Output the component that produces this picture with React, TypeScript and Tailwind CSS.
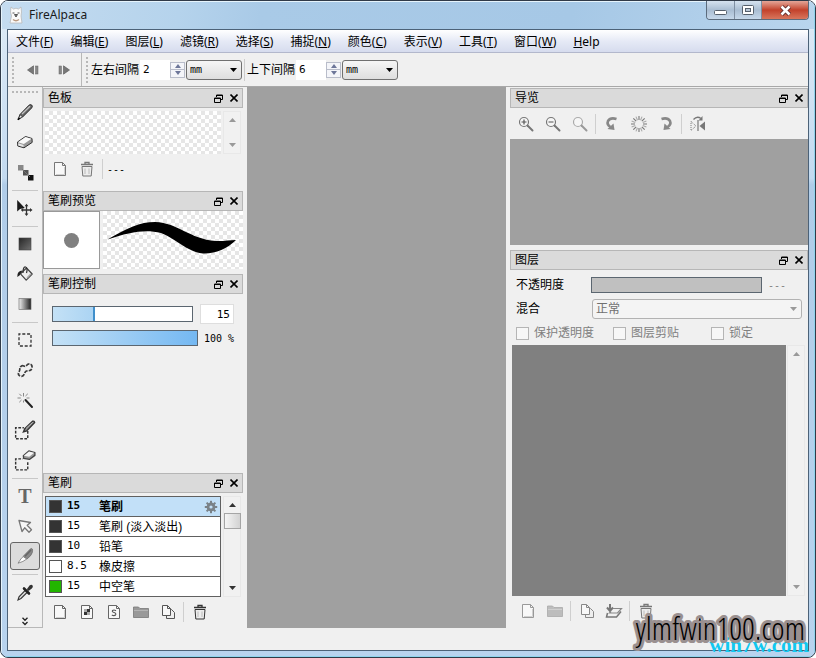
import React from "react";

type Kids = { children?: React.ReactNode };

const song = "font-['Liberation_Sans','Noto_Sans_CJK_SC',sans-serif]";
const mono = "font-['DejaVu_Sans_Mono','Noto_Sans_CJK_SC',monospace]";

function Icon({ children, size = 20 }: Kids & { size?: number }) {
  return (
    <svg width={size} height={size} viewBox="0 0 20 20" fill="none" aria-hidden="true" className="shrink-0">
      {children}
    </svg>
  );
}

/* ---------- icons ---------- */

const PencilIcon = () => (
  <Icon>
    <path d="M3 17.5 L5 12.5 L14 3.2 Q15.5 2 16.8 3.2 Q18 4.6 16.6 6 L7.6 15 Z" fill="#666" stroke="#2c2c2c" strokeWidth="1" />
    <path d="M3.4 17 L5.3 12.8 L7.4 14.9 Z" fill="#eee" stroke="#333" strokeWidth=".7" />
    <path d="M7 12 L15 4.2" stroke="#c4c4c4" strokeWidth="1.2" />
    <path d="M2.8 17.6 L4.8 16.2" stroke="#000" strokeWidth="1.4" />
  </Icon>
);
const EraserIcon = () => (
  <Icon>
    <path d="M2.5 10 L10.5 4.500 L17 6.500 L17.200 10.4 L9 15.8 L2.8 14 Z" fill="#999" stroke="#333" strokeWidth="1" strokeLinejoin="round" />
    <path d="M3 10.200 L10.500 5 L16.500 6.800 L8.800 12 Z" fill="#fafafa" />
    <path d="M3.200 11.300 L8.500 13 V15 L3.300 13.500 Z" fill="#e8e8e8" />
  </Icon>
);
const DotsIcon = () => (
  <Icon>
    <rect x="3" y="3" width="5.500" height="5.500" fill="#888" />
    <rect x="8" y="8" width="5.500" height="5.500" fill="#555" />
    <rect x="13" y="13" width="5.500" height="5.500" fill="#111" />
    <path d="M7 7 L15 15" stroke="#777" strokeWidth="1" />
  </Icon>
);
const MoveIcon = () => (
  <Icon>
    <path d="M2.200 2 V13.5 L5 11 L9.8 10 Z" fill="#1a1a1a" />
    <path d="M11.500 7.500 V16.500 M7 12 H16" stroke="#333" strokeWidth="1.300" />
    <path d="M11.500 5.800 L9.600 8.300 H13.400 Z M11.500 18 L9.600 15.600 H13.400 Z M5.800 12 L8.100 10.100 V13.900 Z M17.500 12 L15 10.100 V13.900 Z" fill="#333" />
  </Icon>
);
const SolidIcon = () => (
  <Icon>
    <defs><linearGradient id="solid" x1="0" y1="0" x2="1" y2="1"><stop stopColor="#262626" /><stop offset="1" stopColor="#707070" /></linearGradient></defs>
    <rect x="4" y="4" width="12" height="12" fill="url(#solid)" stroke="#444" strokeWidth=".6" />
  </Icon>
);
const BucketIcon = () => (
  <Icon>
    <path d="M5.500 9.800 L11.500 4 L17.200 10 L11.200 16.200 Z" fill="#eee" stroke="#444" strokeWidth="1.200" strokeLinejoin="round" />
    <path d="M8 9 Q8 2.500 10.500 3 Q13 3.800 11.500 9" stroke="#333" strokeWidth="1.200" />
    <path d="M7.500 6.500 Q2 6.500 2.300 13 L4.800 11.200 L5.600 9.500 Z" fill="#222" />
    <path d="M12 14 L16 9.800" stroke="#aaa" strokeWidth="1.500" />
  </Icon>
);
const GradientIcon = () => (
  <Icon>
    <defs><linearGradient id="grad"><stop stopColor="#f0f0f0" /><stop offset="1" stopColor="#1e1e1e" /></linearGradient></defs>
    <rect x="4" y="4.500" width="12" height="11" fill="url(#grad)" stroke="#777" strokeWidth=".7" />
  </Icon>
);
const SelectIcon = () => (
  <Icon><rect x="4" y="4" width="12" height="12" stroke="#333" strokeWidth="1.300" strokeDasharray="3 1.800" strokeDashoffset="1.500" /></Icon>
);
const LassoIcon = () => (
  <Icon>
    <path d="M6.500 6 C8.500 4.500 9.500 8 11.500 5.500 C13.500 3 17.500 3.500 17 7.500 C16.500 11.500 13.500 10.500 11.500 11 C9 11.800 10 16 6.500 16.300 C3 16 2.800 13 4.200 11.500 C5.500 10 3.800 7.500 6.500 6 Z" stroke="#3c3c3c" strokeWidth="1.700" strokeDasharray="3.800 1.200" />
  </Icon>
);
const WandIcon = () => (
  <Icon>
    <path d="M10.500 10 L17 17" stroke="#222" strokeWidth="2" strokeLinecap="round" />
    <path d="M8.500 6.500 V3 M8.500 12.500 V10.500 M5.800 8 H2.500 M14.500 8 H11.500 M6.500 6 L4.300 3.800 M10.500 6 L12.800 3.800 M6.500 10 L4.300 12.200" stroke="#888" strokeWidth="1" />
  </Icon>
);
const SelPenIcon = () => (
  <Icon size={22}>
    <path d="M12.500 11 V18 H1.500 V8 H9" stroke="#333" strokeWidth="1.300" strokeDasharray="2.500 1.300" />
    <path d="M8.500 11.800 L9.800 8.800 L17 2 Q18.500 1.500 18.800 3.200 L11.500 10.800 Z" fill="#888" stroke="#333" strokeWidth="1.200" />
    <path d="M11 8.500 L17 3" stroke="#ccc" strokeWidth=".8" />
  </Icon>
);
const SelEraserIcon = () => (
  <Icon size={22}>
    <path d="M12.500 12 V19 H1.500 V9 H8" stroke="#333" strokeWidth="1.300" strokeDasharray="2.500 1.300" />
    <path d="M8.500 6.200 L13.500 1.800 L19 3.200 L19 5.800 L14 9.500 L8.800 8.500 Z" fill="#999" stroke="#444" strokeWidth="1.200" strokeLinejoin="round" />
    <path d="M8.900 6.200 L13.600 2.300 L18.300 3.400 L13.800 7.100 Z" fill="#f5f5f5" />
  </Icon>
);
const ArrowIcon = () => (
  <Icon>
    <path d="M4 4.500 L15.500 6.500 L12.200 9.300 L16.500 13.700 L14 16.200 L9.700 11.800 L7 15.500 Z" fill="#f6f6f6" stroke="#777" strokeWidth="1.300" strokeLinejoin="round" />
  </Icon>
);
const KnifeIcon = () => (
  <Icon>
    <path d="M8 10.500 L15.500 2.800 Q18.300 1.500 17.300 6.500 Q16.600 9.500 12 13 Z" fill="#888" stroke="#666" strokeWidth=".7" />
    <path d="M3 17.200 Q6.200 12 8.200 10.600 L11.700 13 Q8.500 15.800 3 17.200 Z" fill="#fff" stroke="#777" strokeWidth=".8" />
    <path d="M10 10.200 L16 4" stroke="#666" strokeWidth="1.500" />
  </Icon>
);
const DropperIcon = () => (
  <Icon>
    <path d="M3 18 L4 14.800 L10.500 8 L12.600 10 L6 16.500 Z" fill="#ddd" stroke="#333" strokeWidth="1.100" />
    <path d="M9 6.500 L14 11.500" stroke="#222" strokeWidth="2.600" strokeLinecap="round" />
    <path d="M11.800 7.200 L14.500 3.500 Q16.500 2 17.600 3.400 Q18.500 5 16.800 6.500 L13.500 9 Z" fill="#333" />
  </Icon>
);

const pageEdge = "M4.500 3.500 H12.500 L15.500 6.500 V16.500 H4.500 Z";
const PageIcon = ({ tone = "#666" }: { tone?: string }) => (
  <Icon>
    <path d={pageEdge} fill="#f8f8f8" stroke={tone} />
    <path d="M12.500 3.500 V6.500 H15.500" stroke={tone} />
    <path d="M14.500 8 V15.500 H6" stroke="#d0d0d0" />
  </Icon>
);
const PageChecksIcon = () => (
  <Icon>
    <path d={pageEdge} fill="#f8f8f8" stroke="#666" />
    <path d="M12.500 3.500 V6.500 H15.500" stroke="#666" />
    <path d="M10 7 H13 V10 H10 Z M7 10 H10 V13 H7 Z" fill="#333" />
    <path d="M10 10 H13 V13 H10 Z M7 7 H10 V10 H7 Z" fill="#aaa" />
  </Icon>
);
const PageSIcon = () => (
  <Icon>
    <path d={pageEdge} fill="#f8f8f8" stroke="#666" />
    <path d="M12.500 3.500 V6.500 H15.500" stroke="#666" />
    <path d="M12 8.700 Q10 7.500 8.500 8.500 Q7.800 10 10 10.500 Q12.500 11.200 11.600 13 Q10 14.200 7.800 13" stroke="#555" strokeWidth="1.100" />
  </Icon>
);
const FolderIcon = ({ soft = false }: { soft?: boolean }) => (
  <Icon>
    <path d="M2.500 5 H7.500 L9 6.500 H17.500 V15.500 H2.500 Z" fill={soft ? "#bdbdbd" : "#999"} stroke={soft ? "#aaa" : "#777"} strokeWidth=".8" />
    <path d="M3 8.500 H17" stroke={soft ? "#d0d0d0" : "#b4b4b4"} />
  </Icon>
);
const CopyIcon = ({ tone = "#555" }: { tone?: string }) => (
  <Icon>
    <path d="M8.500 7.500 H13.500 L16.500 10.500 V16.500 H8.500 Z" fill="#eee" stroke={tone} />
    <path d="M4.500 3.500 H9.500 L12.500 6.500 V13.500 H4.500 Z" fill="#f8f8f8" stroke={tone} />
    <path d="M9.500 3.500 V6.500 H12.500" stroke={tone} />
  </Icon>
);
const MergeIcon = () => (
  <Icon>
    <path d="M6 3 V9 M3 6.500 L6 10 L9 6.500" stroke="#777" strokeWidth="2" />
    <path d="M9 7.500 H17.500 L13.500 12 H5.500 L7 10.500" stroke="#888" strokeWidth="1.200" />
    <path d="M3.500 12 L2.500 16 H12.500 L17 10.500" stroke="#777" strokeWidth="1.500" />
  </Icon>
);
const TrashIcon = ({ tone = "#555" }: { tone?: string }) => (
  <Icon>
    <path d="M4 5.500 H16 M8 5.500 V3.500 H12 V5.500" stroke={tone} strokeWidth="1.300" />
    <path d="M5 7.500 H15 L14.200 17 H5.800 Z" fill="#ededed" stroke={tone} strokeLinejoin="round" />
    <path d="M8 9.500 V15 M12 9.500 V15" stroke="#bbb" />
  </Icon>
);

const Magnifier = ({ mark, soft = false }: { mark?: string; soft?: boolean }) => (
  <Icon>
    <circle cx="8" cy="8" r="4.500" fill="#f6f6f6" stroke={soft ? "#aaa" : "#777"} strokeWidth="1.200" />
    <path d="M11.500 11.500 L16.500 16.500" stroke={soft ? "#999" : "#777"} strokeWidth="2" strokeLinecap="round" />
    {mark && <path d={mark} stroke="#555" strokeWidth="1.200" />}
  </Icon>
);
const RotateIcon = ({ right = false }: { right?: boolean }) => (
  <Icon>
    <g transform={right ? "translate(20 0) scale(-1 1)" : undefined}>
      <path d="M14.500 5 Q8.500 3 6 7 Q4.500 10.500 8.500 13" stroke="#888" strokeWidth="2.600" />
      <path d="M5.500 15 L12.500 16 L11.500 9.500 Z" fill="#888" />
    </g>
  </Icon>
);
const BurstIcon = () => (
  <Icon>
    {Array.from({ length: 16 }, (_, i) => (
      <path key={i} d="M10 2 V6" stroke={i % 2 ? "#aaa" : "#777"} strokeWidth="1.100" transform={`rotate(${i * 22.5} 10 10)`} />
    ))}
  </Icon>
);
const FlipIcon = () => (
  <Icon>
    <path d="M10 6 V17" stroke="#777" strokeWidth="1.200" />
    <path d="M17 7.500 V16.500 L11.500 12 Z" fill="#777" />
    <path d="M3 7.500 L8 12 L3 16.500 Z" stroke="#777" strokeDasharray="1 1" />
    <path d="M5.500 5.500 Q9 1.500 13 4.500" stroke="#777" strokeWidth="1.300" />
    <path d="M14.500 2 V6.500 H10.500 Z" fill="#777" />
  </Icon>
);
const GearIcon = () => (
  <svg width="14" height="14" viewBox="0 0 14 14" aria-hidden="true">
    <circle cx="7" cy="7" r="3" fill="none" stroke="#7a8288" strokeWidth="2.800" />
    {Array.from({ length: 8 }, (_, i) => (
      <rect key={i} x="6" y="0.800" width="2" height="2.600" fill="#7a8288" transform={`rotate(${i * 45} 7 7)`} />
    ))}
  </svg>
);
const Triangle = ({ down = false, color = "#777", w = 7 }: { down?: boolean; color?: string; w?: number }) => (
  <svg width={w} height="4" viewBox="0 0 8 4" preserveAspectRatio="none" aria-hidden="true" className="shrink-0">
    <path d={down ? "M0 0 H8 L4 4 Z" : "M0 4 H8 L4 0 Z"} fill={color} />
  </svg>
);
const StepIcon = ({ right = false }: { right?: boolean }) => (
  <svg width="12" height="10" viewBox="0 0 12 10" aria-hidden="true">
    <g transform={right ? "translate(12 0) scale(-1 1)" : undefined}>
      <path d="M0.500 5 L6.500 0.800 V9.200 Z" fill="#777" stroke="#555" strokeWidth=".6" />
      <rect x="8.500" y="1" width="2.500" height="8" fill="#888" stroke="#666" strokeWidth=".5" />
    </g>
  </svg>
);
const AlpacaIcon = () => (
  <svg width="14" height="18" viewBox="0 0 14 18" aria-hidden="true">
    <path d="M2 1 L4.500 3 L7 2.200 L9.500 3 L12 1 L12.500 6 L12 10 L13 17 H1 L2.500 10 L1.500 6 Z" fill="#fafafa" stroke="#b9b9b9" strokeWidth=".8" />
    <path d="M3.500 7 H5.500 M8.500 7 H10.500 M5.500 8.500 H8.500 L7 11 Z" stroke="#555" fill="#777" />
    <path d="M4 13.500 Q7 16 10 13.500" stroke="#bb9a82" strokeWidth="1.500" fill="none" />
  </svg>
);

/* ---------- shared pieces ---------- */

function Btn({ label, className = "", children }: Kids & { label: string; className?: string }) {
  return (
    <button type="button" aria-label={label} className={`flex shrink-0 items-center justify-center ${className}`}>
      {children}
    </button>
  );
}

const Divider = () => <span className="mx-[2px] h-5 w-px bg-[#cfcfcf]" />;

function PanelHeader({ title }: { title: string }) {
  return (
    <header className="flex h-5 shrink-0 items-center border border-[#b6b6b6] bg-[#dadada] pl-1">
      <h2 className="flex-1 text-xs leading-[18px] text-black">{title}</h2>
      <Btn label="浮动" className="h-4 w-4">
        <svg width="9" height="9" viewBox="0 0 9 9" fill="none" stroke="#000" aria-hidden="true">
          <path d="M2.500 3 V1 H8.500 V5.500 H6.500 M2.500 1.500 H8.500" />
          <path d="M.5 4 H6.500 V8.500 H.5 Z M.5 4.500 H6.500" />
        </svg>
      </Btn>
      <Btn label="关闭" className="h-4 w-4">
        <svg width="8" height="8" viewBox="0 0 8 8" stroke="#000" strokeWidth="1.600" aria-hidden="true">
          <path d="M.5 .5 L7.500 7.500 M7.500 .5 L.5 7.500" />
        </svg>
      </Btn>
    </header>
  );
}

function ScrollRail({ dark = false, thumb = false }: { dark?: boolean; thumb?: boolean }) {
  const c = dark ? "#333" : "#999";
  return (
    <div className="flex w-[18px] shrink-0 flex-col items-center border border-[#e8e8e8] bg-[#f1f1f1]">
      <Btn label="向上滚动" className="h-4 w-4"><Triangle color={c} /></Btn>
      {thumb && <div className="h-4 w-[17px] border border-[#a5a5a5] bg-gradient-to-r from-[#f5f5f5] to-[#d2d2d2]" />}
      <div className="flex-1" />
      <Btn label="向下滚动" className="h-4 w-4"><Triangle down color={c} /></Btn>
    </div>
  );
}

const checker =
  "bg-[conic-gradient(#e6e6e6_25%,#fff_0_50%,#e6e6e6_0_75%,#fff_0)] bg-[length:8px_8px]";

/* ---------- title, menu, toolbar ---------- */

function TitleBar() {
  return (
    <div className="flex h-7 shrink-0 items-start">
      <div className="flex flex-1 items-center gap-[6px] pl-[2px] pt-[5px] font-['Noto_Sans',sans-serif]">
        <AlpacaIcon />
        <h1 className="text-xs leading-4 text-[#1a1a1a]">FireAlpaca</h1>
      </div>
      <div className="flex h-[19px] overflow-hidden rounded-b border border-t-0 border-[#5b6b7c]">
        <Btn label="最小化" className="w-7 border-r border-[#7f8fa2] bg-gradient-to-b from-[#d5e2ef] via-[#a9bdd2] to-[#c6d8ea]">
          <svg width="13" height="6" aria-hidden="true" className="mt-[6px]"><rect x=".5" y=".5" width="12" height="4" rx="1" fill="#fff" stroke="#56606c" /></svg>
        </Btn>
        <Btn label="最大化" className="w-[27px] border-r border-[#7f8fa2] bg-gradient-to-b from-[#d5e2ef] via-[#a9bdd2] to-[#c6d8ea]">
          <svg width="12" height="10" aria-hidden="true">
            <rect x=".5" y=".5" width="11" height="9" rx="1" fill="#fff" stroke="#56606c" />
            <rect x="3.500" y="3.500" width="5" height="3" fill="#b9c7d6" stroke="#56606c" />
          </svg>
        </Btn>
        <Btn label="关闭窗口" className="w-[46px] bg-gradient-to-b from-[#e3a598] via-[#c2412b] to-[#d8755c]">
          <svg width="13" height="11" viewBox="0 0 13 11" aria-hidden="true">
            <path d="M2.500 1.500 L10.500 9.500 M10.500 1.500 L2.500 9.500" stroke="#5f2a28" strokeWidth="4.400" />
            <path d="M2.500 1.500 L10.500 9.500 M10.500 1.500 L2.500 9.500" stroke="#fff" strokeWidth="2.600" />
          </svg>
        </Btn>
      </div>
    </div>
  );
}

const menus: [string, string][] = [
  ["文件", "F"], ["编辑", "E"], ["图层", "L"], ["滤镜", "R"], ["选择", "S"],
  ["捕捉", "N"], ["颜色", "C"], ["表示", "V"], ["工具", "T"], ["窗口", "W"],
];

function MenuBar() {
  return (
    <nav className="flex h-[23px] shrink-0 items-center gap-px border-b border-[#b3b8cc] bg-gradient-to-b from-white via-[#e6eaf6] to-[#d6dcee] pt-px font-['Noto_Sans','Noto_Sans_CJK_SC',sans-serif] text-xs leading-5 text-black">
      {menus.map(([name, key]) => (
        <button key={key} type="button" className="px-2">
          {name}(<u>{key}</u>)
        </button>
      ))}
      <button type="button" className="px-2"><u>H</u>elp</button>
    </nav>
  );
}

const Grip = () => (
  <span className="h-[26px] w-[2px] bg-[linear-gradient(#b8b8b8_50%,transparent_50%)] bg-[length:2px_4px]" />
);

function GapField({ id, label, value }: { id: string; label: string; value: string }) {
  return (
    <div className="flex items-center">
      <label htmlFor={id} className="mr-px text-xs">{label}</label>
      <input id={id} defaultValue={value} className={`h-5 w-[30px] bg-white pl-[3px] text-[11px] outline-none ${mono}`} />
      <div className="flex h-4 w-[15px] flex-col border border-[#b9bdca] bg-[#f4f5f9]">
        <Btn label={`${label} 增加`} className="flex-1"><Triangle color="#6d7699" w={6} /></Btn>
        <span className="h-px bg-[#b9bdca]" />
        <Btn label={`${label} 减少`} className="flex-1"><Triangle down color="#6d7699" w={6} /></Btn>
      </div>
      <div className="ml-px grid w-14 items-center">
        <select aria-label={`${label} 单位`} defaultValue="mm" className={`col-start-1 row-start-1 h-5 appearance-none rounded-[3px] border border-[#707070] bg-gradient-to-b from-[#f6f6f6] to-[#dedede] pl-[3px] text-[10px] ${mono}`}>
          <option>mm</option>
          <option>px</option>
        </select>
        <span className="pointer-events-none col-start-1 row-start-1 mr-[5px] justify-self-end"><Triangle down color="#000" /></span>
      </div>
    </div>
  );
}

function ToolBar() {
  return (
    <div className="flex h-[34px] shrink-0 items-center border-b border-[#a8a8a8] bg-[#f0f0f0] pl-1">
      <Grip />
      <Btn label="上一个" className="ml-[3px] h-7 w-[31px]"><StepIcon /></Btn>
      <Btn label="下一个" className="h-7 w-[31px]"><StepIcon right /></Btn>
      <span className="mx-[2px] h-full w-px bg-[#b8b8b8]" />
      <span className="w-[2px]" />
      <Grip />
      <span className="w-[3px]" />
      <GapField id="gap-x" label="左右间隔" value="2" />
      <span className="mx-[2px] h-[22px] w-px bg-[#cccccc]" />
      <GapField id="gap-y" label="上下间隔" value="6" />
    </div>
  );
}

/* ---------- tool palette ---------- */

const toolGroups: [string, React.ReactNode][][] = [
  [["铅笔", <PencilIcon />], ["橡皮", <EraserIcon />], ["点", <DotsIcon />]],
  [["移动", <MoveIcon />]],
  [["填充", <SolidIcon />], ["油漆桶", <BucketIcon />], ["渐变", <GradientIcon />]],
  [["选框", <SelectIcon />], ["套索", <LassoIcon />], ["魔棒", <WandIcon />], ["选择笔", <SelPenIcon />], ["选择橡皮", <SelEraserIcon />]],
  [["文字", <span className="font-['Liberation_Serif',serif] text-[20px] font-bold leading-5 text-[#666]">T</span>], ["操作", <ArrowIcon />], ["分割", <KnifeIcon />]],
  [["吸管", <DropperIcon />]],
];

function Palette() {
  return (
    <aside className="flex w-[35px] shrink-0 flex-col border-b border-r border-[#b8b8b8]">
      <div className="flex h-[10px] items-center justify-center">
        <span className="h-[2px] w-[26px] bg-[linear-gradient(90deg,#b8b8b8_50%,transparent_50%)] bg-[length:4px_2px]" />
      </div>
      {toolGroups.map((group, g) => (
        <React.Fragment key={g}>
          {g > 0 && <div className="flex h-[6px] items-center justify-center"><span className="h-px w-[26px] bg-[#c8c8c8]" /></div>}
          {group.map(([name, icon]) => (
            <Btn
              key={name}
              label={name}
              className={name === "分割" ? "mx-[2px] my-px h-7 rounded-[3px] border border-[#666] bg-[#dcdcdc]" : "h-[30px]"}
            >
              {icon}
            </Btn>
          ))}
        </React.Fragment>
      ))}
      <Btn label="更多工具" className="flex-1">
        <svg width="6" height="9" viewBox="0 0 6 9" fill="none" stroke="#222" strokeWidth="1.300" aria-hidden="true" className="mt-2">
          <path d="M.5 .8 L3 3.300 L5.500 .8 M.5 5 L3 7.500 L5.500 5" />
        </svg>
      </Btn>
    </aside>
  );
}

/* ---------- left dock ---------- */

const brushes = [
  { size: "15", name: "笔刷", swatch: "bg-[#333]", active: true },
  { size: "15", name: "笔刷 (淡入淡出)", swatch: "bg-[#333]" },
  { size: "10", name: "铅笔", swatch: "bg-[#333]" },
  { size: "8.5", name: "橡皮擦", swatch: "bg-white" },
  { size: "15", name: "中空笔", swatch: "bg-[#22b500]" },
];

const slider =
  "block h-4 appearance-none border border-[#5b6670] [&::-webkit-slider-thumb]:h-4 [&::-webkit-slider-thumb]:w-px [&::-webkit-slider-thumb]:appearance-none";

function LeftDock() {
  return (
    <section className="flex w-[200px] shrink-0 flex-col pt-px">
      <PanelHeader title="色板" />
      <div className="mx-[2px] mt-[3px] flex h-[43px] gap-[2px]">
        <div className={`flex-1 ${checker}`} />
        <ScrollRail />
      </div>
      <div className="flex h-[30px] items-center pl-[3px]">
        <Btn label="添加颜色" className="h-6 w-[27px]"><PageIcon tone="#777" /></Btn>
        <Btn label="删除颜色" className="h-6 w-[27px]"><TrashIcon tone="#777" /></Btn>
        <Divider />
        <span className={`ml-[2px] text-[10px] ${mono}`}>---</span>
      </div>

      <div className="mt-[7px] flex flex-col"><PanelHeader title="笔刷预览" /></div>
      <div className="flex h-[58px]">
        <div className="flex w-[57px] items-center justify-center border border-[#999] bg-white">
          <span className="h-[15px] w-[15px] rounded-full bg-[#808080]" />
        </div>
        <div className={`ml-[3px] flex-1 ${checker}`}>
          <svg viewBox="0 0 140 58" className="h-full w-full" aria-hidden="true">
            <path d="M4.500 28.500 C24 17 37 11 52 11 C76 12 86 28 113 30 C120 30.500 126 29 133 29 C124 38 112 43 100 42.500 C82 40 74 28 58 22 C42 18 27 21 4.500 28.500 Z" fill="#000" />
          </svg>
        </div>
      </div>

      <div className="mt-[5px] flex flex-col"><PanelHeader title="笔刷控制" /></div>
      <div className="flex flex-1 flex-col pl-[9px] pt-[10px]">
        <div className="flex h-5 items-center">
          <input aria-label="笔刷大小" type="range" min="0" max="50" defaultValue="15" className={`${slider} w-[141px] bg-[linear-gradient(90deg,#c4e1f6,#abd4f3_29%,#3f8fcb_29%_30%,#fff_30%)]`} />
          <input aria-label="大小数值" defaultValue="15" className={`ml-[7px] h-5 w-[34px] border border-[#dedede] bg-white pr-[3px] text-right text-[11px] ${mono}`} />
        </div>
        <div className="mt-1 flex h-5 items-center">
          <input id="opacity" type="range" defaultValue="100" className={`${slider} w-[146px] bg-[linear-gradient(90deg,#c4e1f6,#74b8f2)]`} />
          <label htmlFor="opacity" className={`ml-[6px] whitespace-pre text-[10px] ${mono}`}>100 %</label>
        </div>
      </div>

      <PanelHeader title="笔刷" />
      <div className="ml-[2px] mr-[2px] mt-[3px] flex h-[101px] gap-[2px]">
        <ul className="flex-1 overflow-hidden border border-b-0 border-[#606060]">
          {brushes.map((b, i) => (
            <li key={i} className={`h-5 border-b border-[#606060] ${b.active ? "bg-[#c2e0f8] font-bold" : "bg-white"}`}>
              <button type="button" className="flex h-full w-full items-center text-left text-xs text-black">
                <span className={`ml-[3px] h-[13px] w-[13px] border border-[#555] ${b.swatch}`} />
                <span className={`ml-[5px] w-8 text-[11px] ${mono}`}>{b.size}</span>
                <span className="flex-1 whitespace-pre">{b.name}</span>
                {b.active && <span className="mr-[2px]"><GearIcon /></span>}
              </button>
            </li>
          ))}
        </ul>
        <ScrollRail dark thumb />
      </div>
      <div className="flex h-[31px] items-center pb-[2px] pl-[3px]">
        <Btn label="新建笔刷" className="h-6 w-[27px]"><PageIcon /></Btn>
        <Btn label="位图笔刷" className="h-6 w-[27px]"><PageChecksIcon /></Btn>
        <Btn label="脚本笔刷" className="h-6 w-[27px]"><PageSIcon /></Btn>
        <Btn label="新建文件夹" className="h-6 w-[27px]"><FolderIcon /></Btn>
        <Btn label="复制笔刷" className="h-6 w-[27px]"><CopyIcon /></Btn>
        <Divider />
        <Btn label="删除笔刷" className="h-6 w-[27px]"><TrashIcon tone="#333" /></Btn>
      </div>
    </section>
  );
}

/* ---------- right dock ---------- */

function Check({ label, className }: { label: string; className: string }) {
  return (
    <label className={`flex items-center text-xs text-[#808080] ${className}`}>
      <input type="checkbox" disabled className="mr-[5px] h-[13px] w-[13px] appearance-none border border-[#b5b5b5] bg-[#f7f7f7]" />
      {label}
    </label>
  );
}

function RightDock() {
  return (
    <section className="flex w-[298px] shrink-0 flex-col pt-px">
      <PanelHeader title="导览" />
      <div className="flex h-[31px] items-center pl-[2px] pt-px">
        <Btn label="放大" className="h-6 w-[27px]"><Magnifier mark="M5.500 8 H10.500 M8 5.500 V10.500" /></Btn>
        <Btn label="缩小" className="h-6 w-[27px]"><Magnifier mark="M5.500 8 H10.500" /></Btn>
        <Btn label="适合窗口" className="h-6 w-[27px]"><Magnifier soft /></Btn>
        <Divider />
        <Btn label="向左旋转" className="h-6 w-[27px]"><RotateIcon /></Btn>
        <Btn label="重置旋转" className="h-6 w-[27px]"><BurstIcon /></Btn>
        <Btn label="向右旋转" className="h-6 w-[27px]"><RotateIcon right /></Btn>
        <Divider />
        <Btn label="翻转" className="h-6 w-[27px]"><FlipIcon /></Btn>
      </div>
      <div className="h-[106px] bg-[#a0a0a0]" />

      <div className="mt-[5px] flex flex-col"><PanelHeader title="图层" /></div>
      <div className="mt-[3px] flex h-6 items-center pl-[6px]">
        <label htmlFor="layer-opacity" className="w-[75px] text-xs">不透明度</label>
        <input id="layer-opacity" type="range" disabled defaultValue="0" className={`${slider} w-[171px] bg-[#c0c0c0] [&::-webkit-slider-thumb]:opacity-0`} />
        <span className={`ml-[6px] text-[10px] text-[#808080] ${mono}`}>---</span>
      </div>
      <div className="flex h-6 items-center pl-[6px] pr-[6px]">
        <label htmlFor="blend" className="w-[76px] text-xs">混合</label>
        <div className="grid flex-1 items-center">
          <select id="blend" disabled className={`col-start-1 row-start-1 h-5 appearance-none rounded-[3px] border border-[#b2b2b2] bg-[#f4f4f4] pl-[3px] text-xs leading-4 text-[#707070] opacity-100 ${song}`}>
            <option>正常</option>
          </select>
          <span className="pointer-events-none col-start-1 row-start-1 mr-[5px] justify-self-end"><Triangle down color="#999" /></span>
        </div>
      </div>
      <div className="flex h-6 items-center pl-[6px]">
        <Check label="保护透明度" className="w-[97px]" />
        <Check label="图层剪贴" className="w-[98px]" />
        <Check label="锁定" className="" />
      </div>
      <div className="ml-[2px] mr-[3px] flex flex-1 gap-px">
        <div className="flex-1 bg-[#808080]" />
        <ScrollRail />
      </div>
      <div className="flex h-8 shrink-0 items-center pb-[2px] pl-1">
        <Btn label="新建图层" className="h-6 w-[27px]"><PageIcon tone="#999" /></Btn>
        <Btn label="新建图层组" className="h-6 w-[27px]"><FolderIcon soft /></Btn>
        <Divider />
        <Btn label="复制图层" className="h-6 w-[27px]"><CopyIcon tone="#888" /></Btn>
        <Btn label="合并图层" className="h-6 w-[27px]"><MergeIcon /></Btn>
        <Divider />
        <Btn label="删除图层" className="h-6 w-[27px]"><TrashIcon tone="#777" /></Btn>
      </div>
    </section>
  );
}

export default function App() {
  return (
    <div className={`relative flex h-screen flex-col overflow-hidden rounded-lg border border-[#303a48] bg-[linear-gradient(#dfebf6,#c3daf0_27%,#b0cce8_28%,#b8d3ee)] text-black ${song}`}>
      <div className="flex min-h-0 flex-1 flex-col bg-[linear-gradient(100deg,#c5dcf0,#b5d3ec_22%,#a9cae7_32%,#a6c8e6_70%,#b9d5ed)] bg-[length:100%_28px] bg-no-repeat px-[6px] pb-[6px] shadow-[inset_1px_1px_0_#e6f4fc,inset_-1px_-1px_0_#8fd4ec]">
        <TitleBar />
        <div className="flex min-h-0 flex-1 flex-col border border-[#4c6278] bg-[#f0f0f0]">
          <MenuBar />
          <ToolBar />
          <main className="flex min-h-0 flex-1">
            <Palette />
            <LeftDock />
            <div className="mx-1 flex-1 bg-[#a0a0a0]" />
            <RightDock />
          </main>
          <footer className="h-[22px] shrink-0" />
        </div>
      </div>
      <div className="pointer-events-none absolute bottom-0 right-[6px] flex flex-col items-end">
        <span className="absolute bottom-0 right-0 font-['Liberation_Serif',serif] text-[21px] font-bold leading-6 text-[#12c8f0]">win7w.com</span>
        <svg width="190" height="44" className="relative overflow-visible font-['Open_Sans_Condensed_Light','Open_Sans_Condensed','Liberation_Sans',sans-serif] text-[32px]">
          <text x="186" y="27" textAnchor="end" fill="#000" stroke="#9a9090" strokeWidth="6" strokeLinejoin="round" paintOrder="stroke">ylmfwin100.com</text>
        </svg>
      </div>
    </div>
  );
}
